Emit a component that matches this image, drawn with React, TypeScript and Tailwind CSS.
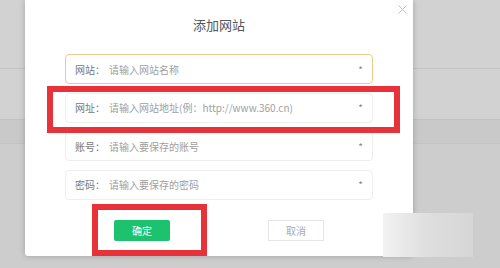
const fields = [
  { label: '网站：', placeholder: '请输入网站名称', active: true },
  { label: '网址：', placeholder: '请输入网站地址(例：http://www.360.cn)', active: false },
  { label: '账号：', placeholder: '请输入要保存的账号', active: false },
  { label: '密码：', placeholder: '请输入要保存的密码', active: false },
]

export default function App() {
  return (
    <div
      className="relative w-[500px] h-[268px] overflow-hidden bg-[#d2d2d2]"
      style={{ fontFamily: '"Noto Sans CJK SC", "Noto Sans", sans-serif' }}
    >
      {/* page behind the dialog */}
      <div className="h-[69px] border-b border-[#c4c4c4]" />
      <div className="h-[51px] border-b border-[#c2c2c2]" />
      <div className="h-[24px] bg-[#c9c9c9] border-b border-[#c4c4c4]" />
      <div className="h-[124px] bg-[#cdcdcd]" />

      {/* dialog */}
      <div className="absolute left-[25px] top-0 w-[388px] h-[256px] bg-white rounded-b-[3px] shadow-[0_0_6px_rgba(0,0,0,0.22)] flex flex-col">
        <svg className="absolute right-[6px] top-[5px]" width="9" height="9" viewBox="0 0 9 9">
          <path d="M0.5 0.5 L8.5 8.5 M8.5 0.5 L0.5 8.5" stroke="#bdbdbd" strokeWidth="1" />
        </svg>
        <div className="pt-[17px] text-center text-[13px] leading-[16px] text-[#555]">添加网站</div>

        <div className="mt-[21px] px-[40px] flex flex-col gap-[8.5px]">
          {fields.map((f) => (
            <div
              key={f.label}
              className={`h-[30px] rounded-[4px] border flex items-center pl-[9px] pr-[9px] text-[10px] ${
                f.active ? 'border-[#f3c98a]' : 'border-[#eeeeee]'
              }`}
            >
              <span className="w-[34px] text-[#777]">{f.label}</span>
              <span className="flex-1 text-[#a0a0a0] whitespace-nowrap">{f.placeholder}</span>
              <span className="text-[#888] text-[10px]">*</span>
            </div>
          ))}
        </div>

        <div className="mt-[20px] px-[89px] flex justify-between">
          <button className="w-[56px] h-[21px] rounded-[2px] bg-[#1dc26f] text-white text-[10px]">确定</button>
          <button className="w-[56px] h-[21px] border border-[#e6e6e6] text-[#aaa] text-[10px]">取消</button>
        </div>
      </div>

      {/* annotation boxes */}
      <div className="absolute left-[47px] top-[86px] w-[353px] h-[47px] border-[6px] border-[#e8323a]" />
      <div className="absolute left-[92px] top-[204px] w-[115px] h-[52px] border-[6px] border-[#e8323a]" />

      {/* watermark patch */}
      <div className="absolute left-[383px] top-[213px] w-[90px] h-[44px] bg-gradient-to-r from-[#f2f2f2] via-[#dedede] to-[#d6d6d6]" />
    </div>
  )
}
